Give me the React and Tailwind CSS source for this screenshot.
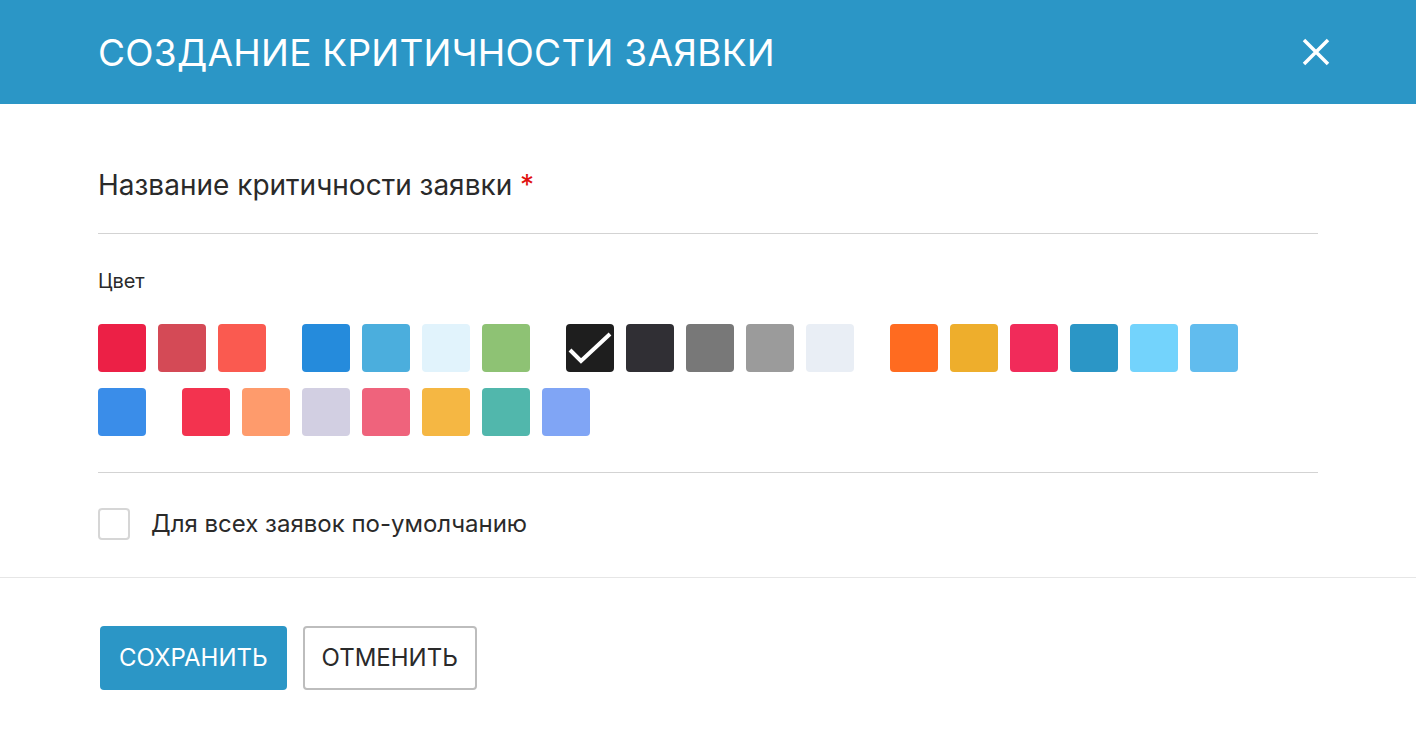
const row1 = [
  '#EC2046', '#D44A56', '#FA5A50', null,
  '#258BDC', '#4BAEDD', '#E1F3FC', '#8EC274', null,
  '#1E1E1E', '#302F34', '#787878', '#9B9B9B', '#E9EEF5', null,
  '#FF6B20', '#EEAE2C', '#F12B5A', '#2B96C6', '#73D3FC', '#61BCEE',
]
const row2 = ['#3A8DE9', null, '#F3334F', '#FE9B6C', '#D2CFE2', '#EF637C', '#F5B743', '#51B7AC', '#80A5F5']

const selected = '#1E1E1E'

function Swatch({ color }) {
  if (!color) return <div className="w-3 h-12" />
  return (
    <div className="w-12 h-12 rounded-[4px]" style={{ backgroundColor: color }}>
      {color === selected && (
        <svg width="48" height="48" viewBox="0 0 48 48" fill="none">
          <path d="M4 26 L15 37 L44 10" stroke="white" strokeWidth="4" />
        </svg>
      )}
    </div>
  )
}

export default function App() {
  return (
    <div className="w-[1416px] h-[738px] bg-white text-[#2a2a2a] font-['Inter','Noto_Sans',sans-serif]">
      <header className="h-[104px] bg-[#2B96C6] flex items-center justify-between pl-[98px] pr-[70px]">
        <h1 className="text-white text-[37px] font-normal uppercase leading-none tracking-[0.25px]">
          Создание критичности заявки
        </h1>
        <button aria-label="Закрыть" className="w-[60px] h-[60px] flex items-center justify-center">
          <svg width="28" height="28" viewBox="0 0 28 28">
            <path d="M2 2 L26 26 M26 2 L2 26" stroke="white" strokeWidth="3.5" />
          </svg>
        </button>
      </header>

      <div className="px-[98px]">
        <div className="pt-[63px] pb-[30px] border-b border-[#d3d3d3]">
          <label className="text-[28px] leading-9 block">
            Название критичности заявки <span className="text-[#e01010]">*</span>
          </label>
        </div>

        <div className="pt-[35px] pb-[36px] border-b border-[#d3d3d3]">
          <div className="text-[20px] leading-6">Цвет</div>
          <div className="mt-[31px] flex flex-col gap-4">
            <div className="flex gap-3">
              {row1.map((c, i) => <Swatch key={i} color={c} />)}
            </div>
            <div className="flex gap-3">
              {row2.map((c, i) => <Swatch key={i} color={c} />)}
            </div>
          </div>
        </div>

        <div className="pt-[35px] pb-[37px] flex items-center gap-[21px]">
          <div className="w-8 h-8 rounded-[4px] border-2 border-[#d6d6d6] bg-white" />
          <span className="text-[24px] leading-8">Для всех заявок по-умолчанию</span>
        </div>
      </div>

      <div className="border-t border-[#e6e6e6] pl-[100px] pt-[48px] flex gap-4">
        <button className="h-16 px-[19px] rounded-[4px] bg-[#2B96C6] text-white text-[24px] uppercase">
          Сохранить
        </button>
        <button className="h-16 px-[17px] rounded-[4px] border-2 border-[#bdbdbd] bg-white text-[#2a2a2a] text-[24px] uppercase">
          Отменить
        </button>
      </div>
    </div>
  )
}
